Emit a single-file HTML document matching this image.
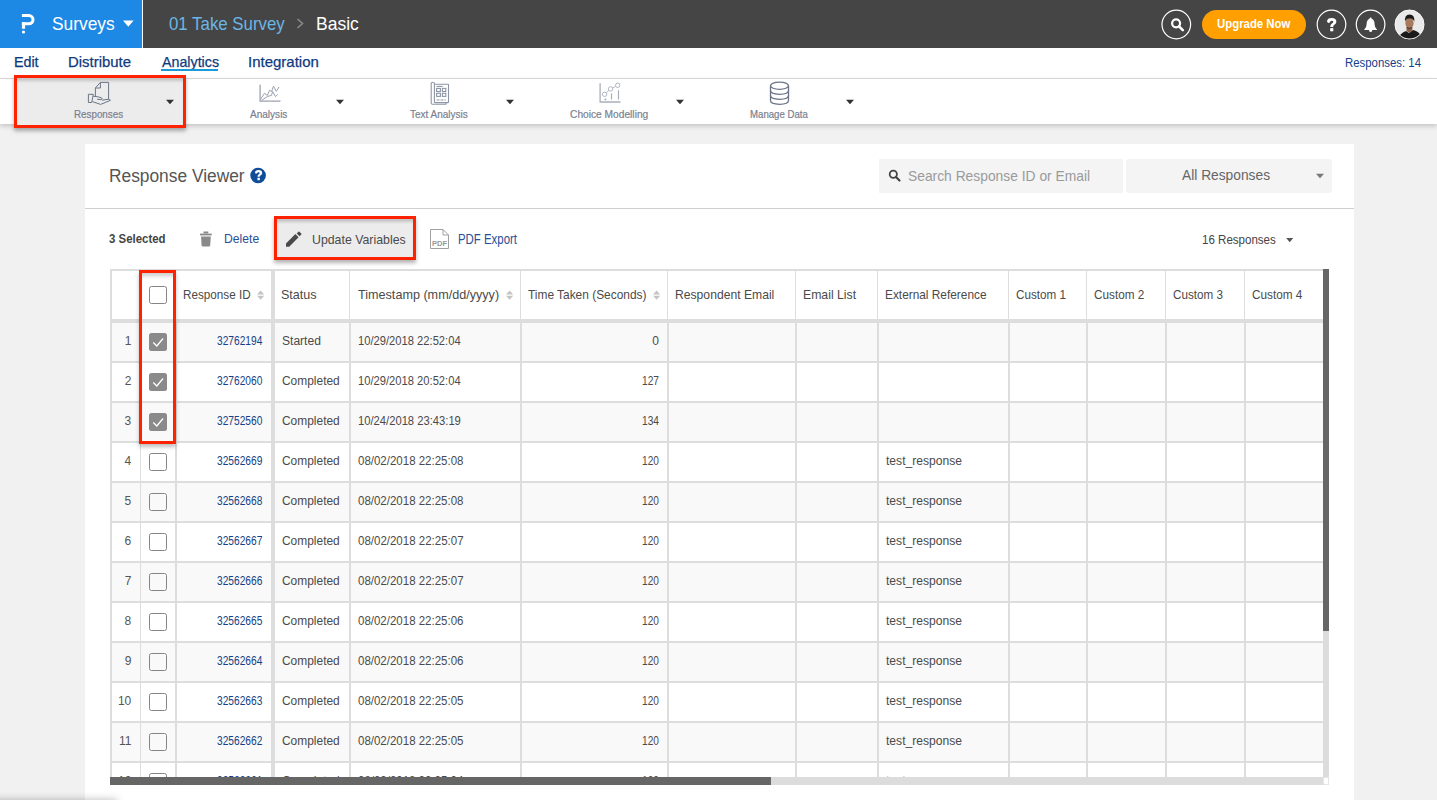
<!DOCTYPE html><html><head><meta charset="utf-8"><style>
*{margin:0;padding:0;box-sizing:border-box}
html,body{width:1437px;height:800px;overflow:hidden;background:#f1f1f1;font-family:"Liberation Sans",sans-serif;position:relative}
svg{position:absolute;overflow:visible}
</style></head><body>
<div style="position:absolute;left:0px;top:0px;width:1437px;height:48px;background:#454545"></div>
<div style="position:absolute;left:0px;top:0px;width:142px;height:48px;background:#1e88e5"></div>
<div style="position:absolute;left:142px;top:0px;width:1px;height:48px;background:#f4f6f8"></div>
<svg style="left:0;top:0" width="60" height="48"><path d="M21.9 15.6 H28.9 A4.1 4.1 0 0 1 28.9 23.8 H21.9" fill="none" stroke="#fff" stroke-width="3"/><rect x="21.9" y="22.3" width="3.2" height="6.4" fill="#fff"/><circle cx="23.5" cy="32" r="1.6" fill="#fff"/></svg>
<div style="position:absolute;left:51.52px;top:14.00px;font-size:19px;line-height:19px;white-space:nowrap;color:#ffffff;transform:scaleX(0.9140);transform-origin:0 0;">Surveys</div>
<svg style="left:0;top:0" width="142" height="48"><path d="M123 20.6 H133.6 L128.3 26.7 Z" fill="#fff"/></svg>
<div style="position:absolute;left:168.61px;top:14.00px;font-size:19px;line-height:19px;white-space:nowrap;color:#6cb6e6;transform:scaleX(0.8864);transform-origin:0 0;">01 Take Survey</div>
<svg style="left:0;top:0" width="400" height="48"><path d="M297.5 19 L302.5 23.5 L297.5 28" fill="none" stroke="#8a8a8a" stroke-width="1.6"/></svg>
<div style="position:absolute;left:315.60px;top:14.00px;font-size:19px;line-height:19px;white-space:nowrap;color:#ffffff;transform:scaleX(0.9222);transform-origin:0 0;">Basic</div>
<svg style="left:0;top:0" width="1437" height="48"><circle cx="1176.3" cy="24.5" r="14.3" fill="none" stroke="#fff" stroke-width="1.2"/><circle cx="1176.1" cy="23.3" r="4" fill="none" stroke="#fff" stroke-width="2.2"/><path d="M1179 26.3 L1182.8 30.1" stroke="#fff" stroke-width="2.6" stroke-linecap="round"/><rect x="1202" y="10" width="104" height="29" rx="14.5" fill="#ffa000"/><circle cx="1331.5" cy="24.5" r="14.3" fill="none" stroke="#fff" stroke-width="1.2"/><circle cx="1370.6" cy="24.5" r="14.3" fill="none" stroke="#fff" stroke-width="1.2"/><path d="M1364 30 Q1366.6 27.8 1366.6 24.6 Q1366.6 18.8 1370.6 18.8 Q1374.6 18.8 1374.6 24.6 Q1374.6 27.8 1377.2 30 Z" fill="#fff"/><circle cx="1370.6" cy="18.6" r="1.1" fill="#fff"/><circle cx="1370.6" cy="30.6" r="1.5" fill="#fff"/><circle cx="1409.5" cy="24.5" r="14.5" fill="#ececec" stroke="#fff" stroke-width="1"/></svg>
<div style="position:absolute;left:1216.82px;top:17.00px;font-size:13px;line-height:13px;white-space:nowrap;color:#ffffff;font-weight:bold;transform:scaleX(0.8759);transform-origin:0 0;">Upgrade Now</div>
<svg style="left:1326.9px;top:17.8px" width="9.4" height="13.3" viewBox="0 0 100 100" preserveAspectRatio="none"><path d="M13 38 Q0 26 0 26 Q2 0 50 0 Q100 0 100 29 Q100 45 76 53 Q66 58 66 67 H35 Q35 48 52 41 Q67 36 67 28 Q67 21 50 21 Q33 21 30 33 Z" fill="#fff"/><rect x="34" y="76" width="33" height="24" fill="#fff"/></svg>
<svg style="left:0;top:0" width="1437" height="48"><clipPath id="av"><circle cx="1409.5" cy="24.5" r="14"/></clipPath><g clip-path="url(#av)"><rect x="1395" y="10" width="29" height="29" fill="#e9e9e9"/><path d="M1397 40 Q1400 33 1406 31 L1409 33 L1413 30 Q1420 31 1423 40 Z" fill="#1a1a1a"/><path d="M1406.4 27 L1406.6 31 L1409.5 33 L1412.4 30 L1412.4 27 Z" fill="#8a6048"/><ellipse cx="1409.5" cy="23.2" rx="4.1" ry="5.2" fill="#a77a5e"/><path d="M1405 22 Q1404.2 15 1409.5 14.6 Q1415 14.6 1414.2 22 Q1413.6 18.2 1409.5 18.4 Q1405.6 18.2 1405 22Z" fill="#1a1a1a"/><path d="M1407 27.6 Q1409.5 29.2 1412 27.6" stroke="#2a1a14" stroke-width="0.8" fill="none"/></g></svg>
<div style="position:absolute;left:0px;top:48px;width:1437px;height:30px;background:#fff"></div>
<div style="position:absolute;left:0px;top:78px;width:1437px;height:1px;background:#dcdcdc"></div>
<div style="position:absolute;left:13.86px;top:55.00px;font-size:14.5px;line-height:14.5px;white-space:nowrap;color:#0f3a7e;transform:scaleX(0.9840);transform-origin:0 0;-webkit-text-stroke:0.25px #0f3a7e;">Edit</div>
<div style="position:absolute;left:68.41px;top:55.00px;font-size:14.5px;line-height:14.5px;white-space:nowrap;color:#0f3a7e;transform:scaleX(1.0282);transform-origin:0 0;-webkit-text-stroke:0.25px #0f3a7e;">Distribute</div>
<div style="position:absolute;left:161.50px;top:55.00px;font-size:14.5px;line-height:14.5px;white-space:nowrap;color:#0f3a7e;transform:scaleX(0.9827);transform-origin:0 0;-webkit-text-stroke:0.25px #0f3a7e;">Analytics</div>
<div style="position:absolute;left:161px;top:69px;width:57px;height:2px;background:#1a9ad6"></div>
<div style="position:absolute;left:247.65px;top:55.00px;font-size:14.5px;line-height:14.5px;white-space:nowrap;color:#0f3a7e;transform:scaleX(1.0341);transform-origin:0 0;-webkit-text-stroke:0.25px #0f3a7e;">Integration</div>
<div style="position:absolute;left:1344.89px;top:57.00px;font-size:12px;line-height:12px;white-space:nowrap;color:#12408c;transform:scaleX(0.9495);transform-origin:0 0;">Responses: 14</div>
<div style="position:absolute;left:0px;top:79px;width:1437px;height:45px;background:#fff;box-shadow:0 2px 5px rgba(0,0,0,0.2)"></div>
<div style="position:absolute;left:14px;top:75px;width:172px;height:53px;border:3px solid #ff2200;background:#ececec;box-shadow:inset 0 4px 3px -1px rgba(0,0,0,0.17), 0 3px 4px rgba(0,0,0,0.3)"></div>
<div style="position:absolute;left:74.21px;top:110.00px;font-size:10.2px;line-height:10.2px;white-space:nowrap;color:#7b8190;transform:scaleX(0.9623);transform-origin:0 0;-webkit-text-stroke:0.2px #7b8190;">Responses</div>
<svg style="left:0;top:0" width="1" height="1"><path d="M166.0 99.85 H174.0 L170 104.15 Z" fill="#333"/></svg>
<div style="position:absolute;left:250.30px;top:110.00px;font-size:10.2px;line-height:10.2px;white-space:nowrap;color:#7b8190;transform:scaleX(0.9857);transform-origin:0 0;-webkit-text-stroke:0.2px #7b8190;">Analysis</div>
<svg style="left:0;top:0" width="1" height="1"><path d="M336.0 99.85 H344.0 L340 104.15 Z" fill="#333"/></svg>
<div style="position:absolute;left:410.30px;top:110.00px;font-size:10.2px;line-height:10.2px;white-space:nowrap;color:#7b8190;transform:scaleX(0.9812);transform-origin:0 0;-webkit-text-stroke:0.2px #7b8190;">Text Analysis</div>
<svg style="left:0;top:0" width="1" height="1"><path d="M506.0 99.85 H514.0 L510 104.15 Z" fill="#333"/></svg>
<div style="position:absolute;left:570.09px;top:110.00px;font-size:10.2px;line-height:10.2px;white-space:nowrap;color:#7b8190;-webkit-text-stroke:0.2px #7b8190;">Choice Modelling</div>
<svg style="left:0;top:0" width="1" height="1"><path d="M676.0 99.85 H684.0 L680 104.15 Z" fill="#333"/></svg>
<div style="position:absolute;left:749.73px;top:110.00px;font-size:10.2px;line-height:10.2px;white-space:nowrap;color:#7b8190;transform:scaleX(0.9457);transform-origin:0 0;-webkit-text-stroke:0.2px #7b8190;">Manage Data</div>
<svg style="left:0;top:0" width="1" height="1"><path d="M846.0 99.85 H854.0 L850 104.15 Z" fill="#333"/></svg>
<svg style="left:80px;top:78px" width="40" height="30"><g fill="none" stroke="#6b7586" stroke-width="1.0" stroke-linejoin="round"><path d="M15.4 18.4 V9.9 L20.4 4.4 H28.6 V21.4"/><path d="M15.4 10 H20.4 V4.5"/><path d="M8.4 16.3 H13.3 L11.7 24.5 H8.4 Z"/><path d="M13.3 18.3 Q17 18.2 21.5 19.8 Q23 21 21 21.6 Q19 21.8 17 21"/><path d="M12.4 23.6 L20.6 26.4 L30.5 22.3 L28.5 21.2 L22 22.2"/></g></svg>
<svg style="left:250px;top:78px" width="40" height="30"><g fill="none" stroke="#9aa1ae" stroke-width="1" stroke-linejoin="round"><path d="M10.1 6.7 V23.2 H30.5" stroke-width="1.3"/><path d="M10.5 21.5 L14.5 15.2 L17.3 17.5 L19.5 12.3 L21.5 13.5 L23.5 8.2 L26.3 13.3 L29 9"/><path d="M11.5 22.5 L17.3 18.5 L21.5 17.4 L22.6 13.5 L25.5 18.6 L27.8 16.3"/></g></svg>
<svg style="left:420px;top:78px" width="40" height="30"><g fill="none" stroke="#8e96a5" stroke-width="1.1"><path d="M14.4 6.2 V5.5 Q14.4 4.3 12.8 4.3 Q11.2 4.3 11.2 5.5 V25 Q11.2 26.2 12.4 26.2 H25.9 V24.6"/><rect x="14.4" y="6.2" width="14.1" height="18.4" rx="0.6"/><path d="M16.5 8.4 H22.7"/><rect x="16.6" y="10.4" width="3.8" height="3.1"/><rect x="22.4" y="10.4" width="3.4" height="3.1"/><rect x="16.6" y="15.3" width="3.8" height="3.1"/><rect x="22.4" y="15.3" width="3.4" height="3.1"/><path d="M16.5 22 H25.8" stroke-dasharray="3 1"/></g></svg>
<svg style="left:590px;top:78px" width="40" height="30"><g fill="none" stroke="#a9afba" stroke-width="0.9"><path d="M10.1 5.2 V24 H30.5" stroke-width="1.3"/><circle cx="14.6" cy="16.3" r="2.2"/><circle cx="20.6" cy="10.9" r="2.2"/><circle cx="27.7" cy="7.3" r="2.2"/><path d="M16.3 14.8 L18.9 12.4 M22.6 9.9 L25.7 8.3"/><path d="M21.5 15.4 V21.5 M28.5 12.2 V21.6" stroke-width="1.2"/><circle cx="15.4" cy="21.4" r="0.6" fill="#a0a7b3"/></g></svg>
<svg style="left:760px;top:78px" width="40" height="30"><g fill="none" stroke="#6b7586" stroke-width="1.3"><ellipse cx="19.5" cy="7.7" rx="9" ry="3.6"/><path d="M10.5 7.7 V22.6 Q10.5 26.3 19.5 26.3 Q28.5 26.3 28.5 22.6 V7.7"/><path d="M10.5 12.6 Q10.5 16.3 19.5 16.3 Q28.5 16.3 28.5 12.6"/><path d="M10.5 17.6 Q10.5 21.3 19.5 21.3 Q28.5 21.3 28.5 17.6"/></g></svg>
<div style="position:absolute;left:85px;top:144px;width:1269px;height:700px;background:#fff"></div>
<div style="position:absolute;left:109.21px;top:167.00px;font-size:18.9px;line-height:18.9px;white-space:nowrap;color:#555555;transform:scaleX(0.9178);transform-origin:0 0;">Response Viewer</div>
<svg style="left:0;top:0" width="1" height="1"><circle cx="258.1" cy="175.5" r="7.8" fill="#0f4d99"/></svg>
<svg style="left:254.8px;top:170.4px" width="7.2" height="10.2" viewBox="0 0 100 100" preserveAspectRatio="none"><path d="M13 38 Q0 26 0 26 Q2 0 50 0 Q100 0 100 29 Q100 45 76 53 Q66 58 66 67 H35 Q35 48 52 41 Q67 36 67 28 Q67 21 50 21 Q33 21 30 33 Z" fill="#fff"/><rect x="34" y="76" width="33" height="24" fill="#fff"/></svg>
<div style="position:absolute;left:879px;top:159px;width:244px;height:34px;background:#f4f4f4"></div>
<svg style="left:0;top:0" width="1" height="1"><circle cx="893.3" cy="174.3" r="3.6" fill="none" stroke="#444" stroke-width="1.8"/><path d="M896 177 L899.5 180.5" stroke="#444" stroke-width="2.2" stroke-linecap="round"/></svg>
<div style="position:absolute;left:907.78px;top:168.00px;font-size:15px;line-height:15px;white-space:nowrap;color:#9a9a9a;transform:scaleX(0.9215);transform-origin:0 0;">Search Response ID or Email</div>
<div style="position:absolute;left:1126px;top:159px;width:206px;height:34px;background:#f4f4f4;border-radius:3px"></div>
<div style="position:absolute;left:1181.50px;top:167.00px;font-size:15px;line-height:15px;white-space:nowrap;color:#666666;transform:scaleX(0.9179);transform-origin:0 0;">All Responses</div>
<svg style="left:0;top:0" width="1" height="1"><path d="M1316.0 173.7 H1324.0 L1320 178.3 Z" fill="#777"/></svg>
<div style="position:absolute;left:85px;top:208px;width:1269px;height:1px;background:#cfcfcf"></div>
<div style="position:absolute;left:109.17px;top:233.00px;font-size:12.8px;line-height:12.8px;white-space:nowrap;color:#444444;font-weight:bold;transform:scaleX(0.8938);transform-origin:0 0;">3 Selected</div>
<svg style="left:0;top:0" width="1" height="1"><g fill="#8a8a8a"><rect x="200" y="233.6" width="11.7" height="1.8"/><rect x="203.5" y="231.5" width="4.8" height="2"/><path d="M201 236.5 H210.8 L210.2 245.2 Q210.1 246.4 209 246.4 H202.8 Q201.7 246.4 201.6 245.2 Z"/></g></svg>
<div style="position:absolute;left:223.73px;top:232.00px;font-size:13px;line-height:13px;white-space:nowrap;color:#2a4f96;transform:scaleX(0.9359);transform-origin:0 0;">Delete</div>
<div style="position:absolute;left:274px;top:216px;width:142px;height:44px;border:3px solid #ff2200;background:#ececec;box-shadow:inset 0 4px 3px -1px rgba(0,0,0,0.17), 0 3px 4px rgba(0,0,0,0.3)"></div>
<svg style="left:0;top:0" width="1" height="1"><path d="M286 243.5 V246.7 H289.2 L298.6 237.3 L295.4 234.1 Z M299.6 236.3 L301.3 234.6 Q301.8 234.1 301.3 233.6 L299.4 231.7 Q298.9 231.2 298.4 231.7 L296.7 233.4 Z" fill="#4a4a4a"/></svg>
<div style="position:absolute;left:311.58px;top:233.00px;font-size:13.5px;line-height:13.5px;white-space:nowrap;color:#4a4a4a;transform:scaleX(0.9134);transform-origin:0 0;">Update Variables</div>
<svg style="left:0;top:0" width="1" height="1"><g fill="none" stroke="#a0a0a0" stroke-width="1"><path d="M430.5 229.5 H443 L448.5 235 V248.5 H430.5 Z"/><path d="M443 229.5 V235 H448.5"/></g></svg>
<div style="position:absolute;left:431.50px;top:240.00px;font-size:8px;line-height:8px;white-space:nowrap;color:#999999;font-weight:bold;transform:scaleX(0.9539);transform-origin:0 0;">PDF</div>
<div style="position:absolute;left:458.09px;top:232.00px;font-size:14px;line-height:14px;white-space:nowrap;color:#2a4f96;transform:scaleX(0.8147);transform-origin:0 0;">PDF Export</div>
<div style="position:absolute;left:1201.73px;top:234.00px;font-size:12.6px;line-height:12.6px;white-space:nowrap;color:#444444;transform:scaleX(0.9168);transform-origin:0 0;">16 Responses</div>
<svg style="left:0;top:0" width="1" height="1"><path d="M1286.2 238.0 H1293.2 L1289.7 242.2 Z" fill="#555"/></svg>
<div style="position:absolute;left:110px;top:269px;width:1213px;height:508px;background:#fff"></div>
<div style="position:absolute;left:112px;top:323px;width:1211px;height:38px;background:#f9f9f9"></div>
<div style="position:absolute;left:112px;top:361px;width:1211px;height:2px;background:#dddddd"></div>
<div style="position:absolute;left:112px;top:363px;width:1211px;height:38px;background:#ffffff"></div>
<div style="position:absolute;left:112px;top:401px;width:1211px;height:2px;background:#dddddd"></div>
<div style="position:absolute;left:112px;top:403px;width:1211px;height:38px;background:#f9f9f9"></div>
<div style="position:absolute;left:112px;top:441px;width:1211px;height:2px;background:#dddddd"></div>
<div style="position:absolute;left:112px;top:443px;width:1211px;height:38px;background:#ffffff"></div>
<div style="position:absolute;left:112px;top:481px;width:1211px;height:2px;background:#dddddd"></div>
<div style="position:absolute;left:112px;top:483px;width:1211px;height:38px;background:#f9f9f9"></div>
<div style="position:absolute;left:112px;top:521px;width:1211px;height:2px;background:#dddddd"></div>
<div style="position:absolute;left:112px;top:523px;width:1211px;height:38px;background:#ffffff"></div>
<div style="position:absolute;left:112px;top:561px;width:1211px;height:2px;background:#dddddd"></div>
<div style="position:absolute;left:112px;top:563px;width:1211px;height:38px;background:#f9f9f9"></div>
<div style="position:absolute;left:112px;top:601px;width:1211px;height:2px;background:#dddddd"></div>
<div style="position:absolute;left:112px;top:603px;width:1211px;height:38px;background:#ffffff"></div>
<div style="position:absolute;left:112px;top:641px;width:1211px;height:2px;background:#dddddd"></div>
<div style="position:absolute;left:112px;top:643px;width:1211px;height:38px;background:#f9f9f9"></div>
<div style="position:absolute;left:112px;top:681px;width:1211px;height:2px;background:#dddddd"></div>
<div style="position:absolute;left:112px;top:683px;width:1211px;height:38px;background:#ffffff"></div>
<div style="position:absolute;left:112px;top:721px;width:1211px;height:2px;background:#dddddd"></div>
<div style="position:absolute;left:112px;top:723px;width:1211px;height:38px;background:#f9f9f9"></div>
<div style="position:absolute;left:112px;top:761px;width:1211px;height:2px;background:#dddddd"></div>
<div style="position:absolute;left:112px;top:763px;width:1211px;height:38px;background:#ffffff"></div>
<div style="position:absolute;left:112px;top:801px;width:1211px;height:2px;background:#dddddd"></div>
<div style="position:absolute;left:112px;top:271px;width:1211px;height:48px;background:#fff"></div>
<div style="position:absolute;left:110px;top:269px;width:1213px;height:2px;background:#dddddd"></div>
<div style="position:absolute;left:110px;top:269px;width:2px;height:508px;background:#dddddd"></div>
<div style="position:absolute;left:112px;top:319px;width:1211px;height:4px;background:#dddddd"></div>
<div style="position:absolute;left:140px;top:271px;width:1px;height:48px;background:#dddddd"></div>
<div style="position:absolute;left:140px;top:323px;width:1px;height:454px;background:#dddddd"></div>
<div style="position:absolute;left:175px;top:271px;width:1px;height:48px;background:#dddddd"></div>
<div style="position:absolute;left:175px;top:323px;width:2px;height:454px;background:#dddddd"></div>
<div style="position:absolute;left:271px;top:271px;width:4px;height:506px;background:#dddddd"></div>
<div style="position:absolute;left:349px;top:271px;width:1px;height:48px;background:#dddddd"></div>
<div style="position:absolute;left:349px;top:323px;width:2px;height:454px;background:#dddddd"></div>
<div style="position:absolute;left:520px;top:271px;width:1px;height:48px;background:#dddddd"></div>
<div style="position:absolute;left:520px;top:323px;width:2px;height:454px;background:#dddddd"></div>
<div style="position:absolute;left:667px;top:271px;width:1px;height:48px;background:#dddddd"></div>
<div style="position:absolute;left:667px;top:323px;width:2px;height:454px;background:#dddddd"></div>
<div style="position:absolute;left:795px;top:271px;width:1px;height:48px;background:#dddddd"></div>
<div style="position:absolute;left:795px;top:323px;width:2px;height:454px;background:#dddddd"></div>
<div style="position:absolute;left:877px;top:271px;width:1px;height:48px;background:#dddddd"></div>
<div style="position:absolute;left:877px;top:323px;width:2px;height:454px;background:#dddddd"></div>
<div style="position:absolute;left:1008px;top:271px;width:1px;height:48px;background:#dddddd"></div>
<div style="position:absolute;left:1008px;top:323px;width:2px;height:454px;background:#dddddd"></div>
<div style="position:absolute;left:1086px;top:271px;width:1px;height:48px;background:#dddddd"></div>
<div style="position:absolute;left:1086px;top:323px;width:2px;height:454px;background:#dddddd"></div>
<div style="position:absolute;left:1165px;top:271px;width:1px;height:48px;background:#dddddd"></div>
<div style="position:absolute;left:1165px;top:323px;width:2px;height:454px;background:#dddddd"></div>
<div style="position:absolute;left:1244px;top:271px;width:1px;height:48px;background:#dddddd"></div>
<div style="position:absolute;left:1244px;top:323px;width:2px;height:454px;background:#dddddd"></div>
<div style="position:absolute;left:183.06px;top:289.00px;font-size:12.2px;line-height:12.2px;white-space:nowrap;color:#4a4a4a;transform:scaleX(0.9595);transform-origin:0 0;">Response ID</div>
<svg style="left:0;top:0" width="1" height="1"><g fill="#c4c4c4"><path d="M257 294.6 L260.6 290.6 L264.2 294.6 Z"/><path d="M257 295.8 L260.6 299.8 L264.2 295.8 Z"/></g></svg>
<div style="position:absolute;left:280.83px;top:289.00px;font-size:12.2px;line-height:12.2px;white-space:nowrap;color:#4a4a4a;transform:scaleX(1.0294);transform-origin:0 0;">Status</div>
<div style="position:absolute;left:358.15px;top:289.00px;font-size:12.2px;line-height:12.2px;white-space:nowrap;color:#4a4a4a;transform:scaleX(1.0351);transform-origin:0 0;">Timestamp (mm/dd/yyyy)</div>
<svg style="left:0;top:0" width="1" height="1"><g fill="#c4c4c4"><path d="M506 294.6 L509.6 290.6 L513.2 294.6 Z"/><path d="M506 295.8 L509.6 299.8 L513.2 295.8 Z"/></g></svg>
<div style="position:absolute;left:528.26px;top:289.00px;font-size:12.2px;line-height:12.2px;white-space:nowrap;color:#4a4a4a;transform:scaleX(0.9766);transform-origin:0 0;">Time Taken (Seconds)</div>
<svg style="left:0;top:0" width="1" height="1"><g fill="#c4c4c4"><path d="M653 294.6 L656.6 290.6 L660.2 294.6 Z"/><path d="M653 295.8 L656.6 299.8 L660.2 295.8 Z"/></g></svg>
<div style="position:absolute;left:675.23px;top:289.00px;font-size:12.2px;line-height:12.2px;white-space:nowrap;color:#4a4a4a;transform:scaleX(0.9973);transform-origin:0 0;">Respondent Email</div>
<div style="position:absolute;left:802.72px;top:289.00px;font-size:12.2px;line-height:12.2px;white-space:nowrap;color:#4a4a4a;transform:scaleX(1.0048);transform-origin:0 0;">Email List</div>
<div style="position:absolute;left:885.25px;top:289.00px;font-size:12.2px;line-height:12.2px;white-space:nowrap;color:#4a4a4a;transform:scaleX(0.9731);transform-origin:0 0;">External Reference</div>
<div style="position:absolute;left:1016.02px;top:289.00px;font-size:12.2px;line-height:12.2px;white-space:nowrap;color:#4a4a4a;transform:scaleX(0.9578);transform-origin:0 0;">Custom 1</div>
<div style="position:absolute;left:1094.11px;top:289.00px;font-size:12.2px;line-height:12.2px;white-space:nowrap;color:#4a4a4a;transform:scaleX(0.9636);transform-origin:0 0;">Custom 2</div>
<div style="position:absolute;left:1173.42px;top:289.00px;font-size:12.2px;line-height:12.2px;white-space:nowrap;color:#4a4a4a;transform:scaleX(0.9566);transform-origin:0 0;">Custom 3</div>
<div style="position:absolute;left:1252.11px;top:289.00px;font-size:12.2px;line-height:12.2px;white-space:nowrap;color:#4a4a4a;transform:scaleX(0.9649);transform-origin:0 0;">Custom 4</div>
<div style="position:absolute;left:149px;top:286px;width:18px;height:18px;border:1.2px solid #858585;border-radius:2.5px"></div>
<div style="position:absolute;left:124.68px;top:335.00px;font-size:12px;line-height:12px;white-space:nowrap;color:#555555;">1</div>
<div style="position:absolute;left:149px;top:333px;width:18px;height:18px;background:#8a8a8a;border-radius:2.5px"></div>
<svg style="left:0;top:0" width="1" height="1"><path d="M153.3 342.5 L156.8 346 L163 338.5" fill="none" stroke="#fff" stroke-width="1.3"/></svg>
<div style="position:absolute;left:217.06px;top:335.00px;font-size:12px;line-height:12px;white-space:nowrap;color:#153f86;transform:scaleX(0.8500);transform-origin:0 0;">32762194</div>
<div style="position:absolute;left:282.26px;top:335.00px;font-size:12px;line-height:12px;white-space:nowrap;color:#4a4a4a;transform:scaleX(1.0043);transform-origin:0 0;">Started</div>
<div style="position:absolute;left:357.86px;top:335.00px;font-size:12px;line-height:12px;white-space:nowrap;color:#4a4a4a;transform:scaleX(0.9320);transform-origin:0 0;">10/29/2018 22:52:04</div>
<div style="position:absolute;left:652.16px;top:335.00px;font-size:12px;line-height:12px;white-space:nowrap;color:#4a4a4a;">0</div>
<div style="position:absolute;left:124.68px;top:375.00px;font-size:12px;line-height:12px;white-space:nowrap;color:#555555;">2</div>
<div style="position:absolute;left:149px;top:373px;width:18px;height:18px;background:#8a8a8a;border-radius:2.5px"></div>
<svg style="left:0;top:0" width="1" height="1"><path d="M153.3 382.5 L156.8 386 L163 378.5" fill="none" stroke="#fff" stroke-width="1.3"/></svg>
<div style="position:absolute;left:217.17px;top:375.00px;font-size:12px;line-height:12px;white-space:nowrap;color:#153f86;transform:scaleX(0.8500);transform-origin:0 0;">32762060</div>
<div style="position:absolute;left:282.20px;top:375.00px;font-size:12px;line-height:12px;white-space:nowrap;color:#4a4a4a;transform:scaleX(0.9947);transform-origin:0 0;">Completed</div>
<div style="position:absolute;left:357.86px;top:375.00px;font-size:12px;line-height:12px;white-space:nowrap;color:#4a4a4a;transform:scaleX(0.9320);transform-origin:0 0;">10/29/2018 20:52:04</div>
<div style="position:absolute;left:641.97px;top:375.00px;font-size:12px;line-height:12px;white-space:nowrap;color:#4a4a4a;transform:scaleX(0.8450);transform-origin:0 0;">127</div>
<div style="position:absolute;left:124.62px;top:415.00px;font-size:12px;line-height:12px;white-space:nowrap;color:#555555;">3</div>
<div style="position:absolute;left:149px;top:413px;width:18px;height:18px;background:#8a8a8a;border-radius:2.5px"></div>
<svg style="left:0;top:0" width="1" height="1"><path d="M153.3 422.5 L156.8 426 L163 418.5" fill="none" stroke="#fff" stroke-width="1.3"/></svg>
<div style="position:absolute;left:217.17px;top:415.00px;font-size:12px;line-height:12px;white-space:nowrap;color:#153f86;transform:scaleX(0.8500);transform-origin:0 0;">32752560</div>
<div style="position:absolute;left:282.20px;top:415.00px;font-size:12px;line-height:12px;white-space:nowrap;color:#4a4a4a;transform:scaleX(0.9947);transform-origin:0 0;">Completed</div>
<div style="position:absolute;left:357.86px;top:415.00px;font-size:12px;line-height:12px;white-space:nowrap;color:#4a4a4a;transform:scaleX(0.9341);transform-origin:0 0;">10/24/2018 23:43:19</div>
<div style="position:absolute;left:641.77px;top:415.00px;font-size:12px;line-height:12px;white-space:nowrap;color:#4a4a4a;transform:scaleX(0.8450);transform-origin:0 0;">134</div>
<div style="position:absolute;left:124.44px;top:455.00px;font-size:12px;line-height:12px;white-space:nowrap;color:#555555;">4</div>
<div style="position:absolute;left:149px;top:453px;width:18px;height:18px;border:1.2px solid #858585;border-radius:2.5px"></div>
<div style="position:absolute;left:217.27px;top:455.00px;font-size:12px;line-height:12px;white-space:nowrap;color:#153f86;transform:scaleX(0.8500);transform-origin:0 0;">32562669</div>
<div style="position:absolute;left:282.20px;top:455.00px;font-size:12px;line-height:12px;white-space:nowrap;color:#4a4a4a;transform:scaleX(0.9947);transform-origin:0 0;">Completed</div>
<div style="position:absolute;left:358.30px;top:455.00px;font-size:12px;line-height:12px;white-space:nowrap;color:#4a4a4a;transform:scaleX(0.9579);transform-origin:0 0;">08/02/2018 22:25:08</div>
<div style="position:absolute;left:641.87px;top:455.00px;font-size:12px;line-height:12px;white-space:nowrap;color:#4a4a4a;transform:scaleX(0.8450);transform-origin:0 0;">120</div>
<div style="position:absolute;left:886.02px;top:455.00px;font-size:12px;line-height:12px;white-space:nowrap;color:#4a4a4a;transform:scaleX(1.0080);transform-origin:0 0;">test_response</div>
<div style="position:absolute;left:124.62px;top:495.00px;font-size:12px;line-height:12px;white-space:nowrap;color:#555555;">5</div>
<div style="position:absolute;left:149px;top:493px;width:18px;height:18px;border:1.2px solid #858585;border-radius:2.5px"></div>
<div style="position:absolute;left:217.22px;top:495.00px;font-size:12px;line-height:12px;white-space:nowrap;color:#153f86;transform:scaleX(0.8500);transform-origin:0 0;">32562668</div>
<div style="position:absolute;left:282.20px;top:495.00px;font-size:12px;line-height:12px;white-space:nowrap;color:#4a4a4a;transform:scaleX(0.9947);transform-origin:0 0;">Completed</div>
<div style="position:absolute;left:358.30px;top:495.00px;font-size:12px;line-height:12px;white-space:nowrap;color:#4a4a4a;transform:scaleX(0.9579);transform-origin:0 0;">08/02/2018 22:25:08</div>
<div style="position:absolute;left:641.87px;top:495.00px;font-size:12px;line-height:12px;white-space:nowrap;color:#4a4a4a;transform:scaleX(0.8450);transform-origin:0 0;">120</div>
<div style="position:absolute;left:886.02px;top:495.00px;font-size:12px;line-height:12px;white-space:nowrap;color:#4a4a4a;transform:scaleX(1.0080);transform-origin:0 0;">test_response</div>
<div style="position:absolute;left:124.62px;top:535.00px;font-size:12px;line-height:12px;white-space:nowrap;color:#555555;">6</div>
<div style="position:absolute;left:149px;top:533px;width:18px;height:18px;border:1.2px solid #858585;border-radius:2.5px"></div>
<div style="position:absolute;left:217.27px;top:535.00px;font-size:12px;line-height:12px;white-space:nowrap;color:#153f86;transform:scaleX(0.8500);transform-origin:0 0;">32562667</div>
<div style="position:absolute;left:282.20px;top:535.00px;font-size:12px;line-height:12px;white-space:nowrap;color:#4a4a4a;transform:scaleX(0.9947);transform-origin:0 0;">Completed</div>
<div style="position:absolute;left:358.30px;top:535.00px;font-size:12px;line-height:12px;white-space:nowrap;color:#4a4a4a;transform:scaleX(0.9584);transform-origin:0 0;">08/02/2018 22:25:07</div>
<div style="position:absolute;left:641.87px;top:535.00px;font-size:12px;line-height:12px;white-space:nowrap;color:#4a4a4a;transform:scaleX(0.8450);transform-origin:0 0;">120</div>
<div style="position:absolute;left:886.02px;top:535.00px;font-size:12px;line-height:12px;white-space:nowrap;color:#4a4a4a;transform:scaleX(1.0080);transform-origin:0 0;">test_response</div>
<div style="position:absolute;left:124.68px;top:575.00px;font-size:12px;line-height:12px;white-space:nowrap;color:#555555;">7</div>
<div style="position:absolute;left:149px;top:573px;width:18px;height:18px;border:1.2px solid #858585;border-radius:2.5px"></div>
<div style="position:absolute;left:217.22px;top:575.00px;font-size:12px;line-height:12px;white-space:nowrap;color:#153f86;transform:scaleX(0.8500);transform-origin:0 0;">32562666</div>
<div style="position:absolute;left:282.20px;top:575.00px;font-size:12px;line-height:12px;white-space:nowrap;color:#4a4a4a;transform:scaleX(0.9947);transform-origin:0 0;">Completed</div>
<div style="position:absolute;left:358.30px;top:575.00px;font-size:12px;line-height:12px;white-space:nowrap;color:#4a4a4a;transform:scaleX(0.9584);transform-origin:0 0;">08/02/2018 22:25:07</div>
<div style="position:absolute;left:641.87px;top:575.00px;font-size:12px;line-height:12px;white-space:nowrap;color:#4a4a4a;transform:scaleX(0.8450);transform-origin:0 0;">120</div>
<div style="position:absolute;left:886.02px;top:575.00px;font-size:12px;line-height:12px;white-space:nowrap;color:#4a4a4a;transform:scaleX(1.0080);transform-origin:0 0;">test_response</div>
<div style="position:absolute;left:124.62px;top:615.00px;font-size:12px;line-height:12px;white-space:nowrap;color:#555555;">8</div>
<div style="position:absolute;left:149px;top:613px;width:18px;height:18px;border:1.2px solid #858585;border-radius:2.5px"></div>
<div style="position:absolute;left:217.22px;top:615.00px;font-size:12px;line-height:12px;white-space:nowrap;color:#153f86;transform:scaleX(0.8500);transform-origin:0 0;">32562665</div>
<div style="position:absolute;left:282.20px;top:615.00px;font-size:12px;line-height:12px;white-space:nowrap;color:#4a4a4a;transform:scaleX(0.9947);transform-origin:0 0;">Completed</div>
<div style="position:absolute;left:358.30px;top:615.00px;font-size:12px;line-height:12px;white-space:nowrap;color:#4a4a4a;transform:scaleX(0.9579);transform-origin:0 0;">08/02/2018 22:25:06</div>
<div style="position:absolute;left:641.87px;top:615.00px;font-size:12px;line-height:12px;white-space:nowrap;color:#4a4a4a;transform:scaleX(0.8450);transform-origin:0 0;">120</div>
<div style="position:absolute;left:886.02px;top:615.00px;font-size:12px;line-height:12px;white-space:nowrap;color:#4a4a4a;transform:scaleX(1.0080);transform-origin:0 0;">test_response</div>
<div style="position:absolute;left:124.68px;top:655.00px;font-size:12px;line-height:12px;white-space:nowrap;color:#555555;">9</div>
<div style="position:absolute;left:149px;top:653px;width:18px;height:18px;border:1.2px solid #858585;border-radius:2.5px"></div>
<div style="position:absolute;left:217.06px;top:655.00px;font-size:12px;line-height:12px;white-space:nowrap;color:#153f86;transform:scaleX(0.8500);transform-origin:0 0;">32562664</div>
<div style="position:absolute;left:282.20px;top:655.00px;font-size:12px;line-height:12px;white-space:nowrap;color:#4a4a4a;transform:scaleX(0.9947);transform-origin:0 0;">Completed</div>
<div style="position:absolute;left:358.30px;top:655.00px;font-size:12px;line-height:12px;white-space:nowrap;color:#4a4a4a;transform:scaleX(0.9579);transform-origin:0 0;">08/02/2018 22:25:06</div>
<div style="position:absolute;left:641.87px;top:655.00px;font-size:12px;line-height:12px;white-space:nowrap;color:#4a4a4a;transform:scaleX(0.8450);transform-origin:0 0;">120</div>
<div style="position:absolute;left:886.02px;top:655.00px;font-size:12px;line-height:12px;white-space:nowrap;color:#4a4a4a;transform:scaleX(1.0080);transform-origin:0 0;">test_response</div>
<div style="position:absolute;left:117.90px;top:695.00px;font-size:12px;line-height:12px;white-space:nowrap;color:#555555;">10</div>
<div style="position:absolute;left:149px;top:693px;width:18px;height:18px;border:1.2px solid #858585;border-radius:2.5px"></div>
<div style="position:absolute;left:217.22px;top:695.00px;font-size:12px;line-height:12px;white-space:nowrap;color:#153f86;transform:scaleX(0.8500);transform-origin:0 0;">32562663</div>
<div style="position:absolute;left:282.20px;top:695.00px;font-size:12px;line-height:12px;white-space:nowrap;color:#4a4a4a;transform:scaleX(0.9947);transform-origin:0 0;">Completed</div>
<div style="position:absolute;left:358.30px;top:695.00px;font-size:12px;line-height:12px;white-space:nowrap;color:#4a4a4a;transform:scaleX(0.9579);transform-origin:0 0;">08/02/2018 22:25:05</div>
<div style="position:absolute;left:641.87px;top:695.00px;font-size:12px;line-height:12px;white-space:nowrap;color:#4a4a4a;transform:scaleX(0.8450);transform-origin:0 0;">120</div>
<div style="position:absolute;left:886.02px;top:695.00px;font-size:12px;line-height:12px;white-space:nowrap;color:#4a4a4a;transform:scaleX(1.0080);transform-origin:0 0;">test_response</div>
<div style="position:absolute;left:118.92px;top:735.00px;font-size:12px;line-height:12px;white-space:nowrap;color:#555555;">11</div>
<div style="position:absolute;left:149px;top:733px;width:18px;height:18px;border:1.2px solid #858585;border-radius:2.5px"></div>
<div style="position:absolute;left:217.27px;top:735.00px;font-size:12px;line-height:12px;white-space:nowrap;color:#153f86;transform:scaleX(0.8500);transform-origin:0 0;">32562662</div>
<div style="position:absolute;left:282.20px;top:735.00px;font-size:12px;line-height:12px;white-space:nowrap;color:#4a4a4a;transform:scaleX(0.9947);transform-origin:0 0;">Completed</div>
<div style="position:absolute;left:358.30px;top:735.00px;font-size:12px;line-height:12px;white-space:nowrap;color:#4a4a4a;transform:scaleX(0.9579);transform-origin:0 0;">08/02/2018 22:25:05</div>
<div style="position:absolute;left:641.87px;top:735.00px;font-size:12px;line-height:12px;white-space:nowrap;color:#4a4a4a;transform:scaleX(0.8450);transform-origin:0 0;">120</div>
<div style="position:absolute;left:886.02px;top:735.00px;font-size:12px;line-height:12px;white-space:nowrap;color:#4a4a4a;transform:scaleX(1.0080);transform-origin:0 0;">test_response</div>
<div style="position:absolute;left:118.02px;top:775.00px;font-size:12px;line-height:12px;white-space:nowrap;color:#555555;">12</div>
<div style="position:absolute;left:149px;top:773px;width:18px;height:18px;border:1.2px solid #858585;border-radius:2.5px"></div>
<div style="position:absolute;left:217.27px;top:775.00px;font-size:12px;line-height:12px;white-space:nowrap;color:#153f86;transform:scaleX(0.8500);transform-origin:0 0;">32562661</div>
<div style="position:absolute;left:282.20px;top:775.00px;font-size:12px;line-height:12px;white-space:nowrap;color:#4a4a4a;transform:scaleX(0.9947);transform-origin:0 0;">Completed</div>
<div style="position:absolute;left:358.30px;top:775.00px;font-size:12px;line-height:12px;white-space:nowrap;color:#4a4a4a;transform:scaleX(0.9563);transform-origin:0 0;">08/02/2018 22:25:04</div>
<div style="position:absolute;left:641.87px;top:775.00px;font-size:12px;line-height:12px;white-space:nowrap;color:#4a4a4a;transform:scaleX(0.8450);transform-origin:0 0;">120</div>
<div style="position:absolute;left:886.02px;top:775.00px;font-size:12px;line-height:12px;white-space:nowrap;color:#4a4a4a;transform:scaleX(1.0080);transform-origin:0 0;">test_response</div>
<div style="position:absolute;left:110px;top:777px;width:1213px;height:8px;background:#dcdcdc"></div>
<div style="position:absolute;left:110px;top:777px;width:661px;height:8px;background:#666666"></div>
<div style="position:absolute;left:1323px;top:269px;width:6px;height:508px;background:#dcdcdc"></div>
<div style="position:absolute;left:1323px;top:269px;width:6px;height:362px;background:#666666"></div>
<div style="position:absolute;left:1323px;top:777px;width:6px;height:8px;background:#fff;border:1px solid #e6e6e6"></div>
<div style="position:absolute;left:85px;top:785px;width:1269px;height:15px;background:#fff"></div>
<div style="position:absolute;left:-30px;top:802px;width:145px;height:20px;background:#bbb;box-shadow:0 0 8px 2px rgba(0,0,0,0.28)"></div>
<div style="position:absolute;left:139px;top:270px;width:37px;height:174px;border:3px solid #ff2200;box-shadow:inset 0 6px 4px -3px rgba(0,0,0,0.2), 0 3px 4px rgba(0,0,0,0.25)"></div>
</body></html>
